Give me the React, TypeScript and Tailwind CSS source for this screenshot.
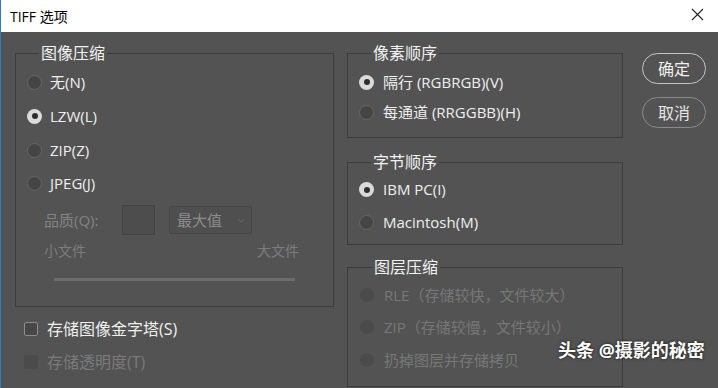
import { ReactNode } from "react";

const font = "font-['Open_Sans','Noto_Sans_CJK_SC',sans-serif]";

function Radio({ checked, disabled }: { checked?: boolean; disabled?: boolean }) {
    if (disabled) {
        return <span className="w-[14px] h-[14px] rounded-full bg-[#4b4b4b] shrink-0" />;
    }
    if (checked) {
        return (
            <span className="w-[15px] h-[15px] rounded-full bg-[#dadada] flex items-center justify-center shrink-0">
                <span className="w-[6px] h-[6px] rounded-full bg-[#2e2e2e]" />
            </span>
        );
    }
    return <span className="w-[15px] h-[15px] rounded-full bg-[#454545] border border-[#666] shrink-0" />;
}

function Option({
    label,
    checked,
    disabled,
    gap = "gap-2",
    h = "h-[34px]",
}: {
    label: string;
    checked?: boolean;
    disabled?: boolean;
    gap?: string;
    h?: string;
}) {
    return (
        <div className={`flex items-center ${gap} ${h}`}>
            <Radio checked={checked} disabled={disabled} />
            <span className={`text-[15px] leading-none ${disabled ? "text-[#777]" : "text-[#efefef]"}`}>{label}</span>
        </div>
    );
}

function Group({ title, className, children }: { title: string; className?: string; children: ReactNode }) {
    return (
        <fieldset className={`border border-[#3c3c3c] ${className ?? ""}`}>
            <legend className="ml-[12px] px-[2px] text-[16px] leading-[20px] text-[#f2f2f2]">{title}</legend>
            {children}
        </fieldset>
    );
}

function Checkbox({ label, disabled }: { label: string; disabled?: boolean }) {
    return (
        <div className="flex items-center gap-[9px] h-[33px]">
            <span
                className={`w-[14px] h-[14px] rounded-[2px] ${
                    disabled ? "bg-[#4b4b4b]" : "bg-[#474747] border border-[#8c8c8c]"
                }`}
            />
            <span className={`text-[16px] leading-none ${disabled ? "text-[#7a7a7a]" : "text-[#f0f0f0]"}`}>{label}</span>
        </div>
    );
}

export default function App() {
    return (
        <div className={`w-[718px] h-[388px] overflow-hidden flex flex-col border-l border-[#2f7bc8] relative ${font}`}>
            {/* title bar */}
            <div className="h-[32px] bg-white flex items-center justify-between pl-[9px] pr-[14px] shrink-0">
                <span className="text-[14px] text-black">TIFF 选项</span>
                <svg width="13" height="13" viewBox="0 0 13 13" className="mt-[-4px]">
                    <path d="M1 1 L12 12 M12 1 L1 12" stroke="#222" strokeWidth="1.1" />
                </svg>
            </div>

            {/* body */}
            <div className="flex-1 bg-[#535353] flex pt-[11px] pl-[14px]">
                {/* left column */}
                <div className="w-[319px] flex flex-col">
                    <Group title="图像压缩" className="h-[264px] pl-[11px] pr-[34px]">
                        <div className="pt-[2px] flex flex-col">
                            <Option label="无(N)" />
                            <Option label="LZW(L)" checked />
                            <Option label="ZIP(Z)" />
                            <Option label="JPEG(J)" h="h-[32px]" />
                        </div>
                        <div className="flex items-center h-[30px] mt-[6px] pl-[17px] text-[15px] text-[#838383]">
                            <span className="w-[78px]">品质(Q):</span>
                            <span className="w-[33px] h-[30px] bg-[#4d4d4d] border border-[#444]" />
                            <span className="ml-[14px] w-[83px] h-[28px] bg-[#4f4f4f] border border-[#474747] rounded-[2px] flex items-center justify-between pl-[7px] pr-[6px]">
                                <span className="text-[15px] text-[#8c8c8c]">最大值</span>
                                <svg width="8" height="5" viewBox="0 0 8 5">
                                    <path d="M1 1 L4 4 L7 1" stroke="#6a6a6a" fill="none" strokeWidth="1" />
                                </svg>
                            </span>
                        </div>
                        <div className="flex justify-between pl-[17px] h-[22px] mt-[4px] items-center text-[14px] text-[#7c7c7c]">
                            <span>小文件</span>
                            <span>大文件</span>
                        </div>
                        <div className="ml-[27px] mr-[4px] mt-[17px] h-[3px] bg-[#6c6c6c]" />
                    </Group>
                    <div className="pl-[9px] mt-[5px] flex flex-col">
                        <Checkbox label="存储图像金字塔(S)" />
                        <Checkbox label="存储透明度(T)" disabled />
                    </div>
                </div>

                {/* right column */}
                <div className="w-[276px] ml-[13px] flex flex-col">
                    <Group title="像素顺序" className="h-[95px] pl-[11px]">
                        <div className="flex flex-col pt-[4px]">
                            <Option label="隔行 (RGBRGB)(V)" checked gap="gap-[9px]" h="h-[30px]" />
                            <Option label="每通道 (RRGGBB)(H)" gap="gap-[9px]" h="h-[30px]" />
                        </div>
                    </Group>
                    <Group title="字节顺序" className="h-[93px] mt-[14px] pl-[11px]">
                        <div className="flex flex-col pt-[1px]">
                            <Option label="IBM PC(I)" checked gap="gap-[9px]" h="h-[33px]" />
                            <Option label="Macintosh(M)" gap="gap-[9px]" h="h-[33px]" />
                        </div>
                    </Group>
                    <Group title="图层压缩" className="h-[130px] mt-[12px] pl-[12px]">
                        <div className="flex flex-col pt-[2px]">
                            <Option label="RLE（存储较快，文件较大）" disabled gap="gap-[10px]" h="h-[32px]" />
                            <Option label="ZIP（存储较慢，文件较小）" disabled gap="gap-[10px]" h="h-[32px]" />
                            <Option label="扔掉图层并存储拷贝" disabled gap="gap-[10px]" h="h-[34px]" />
                        </div>
                    </Group>
                </div>

                {/* buttons */}
                <div className="ml-[19px] mt-[10px] flex flex-col gap-[13px]">
                    <button className="w-[64px] h-[31px] rounded-full border-[1.5px] border-[#c4c4c4] text-[16px] text-[#f0f0f0] leading-none">
                        确定
                    </button>
                    <button className="w-[64px] h-[31px] rounded-full border border-[#8a8a8a] text-[16px] text-[#e6e6e6] leading-none">
                        取消
                    </button>
                </div>
            </div>

            {/* watermark */}
            <div className="absolute left-[557px] top-[337px] text-[18px] font-bold text-white [text-shadow:0_0_3px_rgba(0,0,0,0.8)] whitespace-nowrap">
                头条 @摄影的秘密
            </div>
        </div>
    );
}
